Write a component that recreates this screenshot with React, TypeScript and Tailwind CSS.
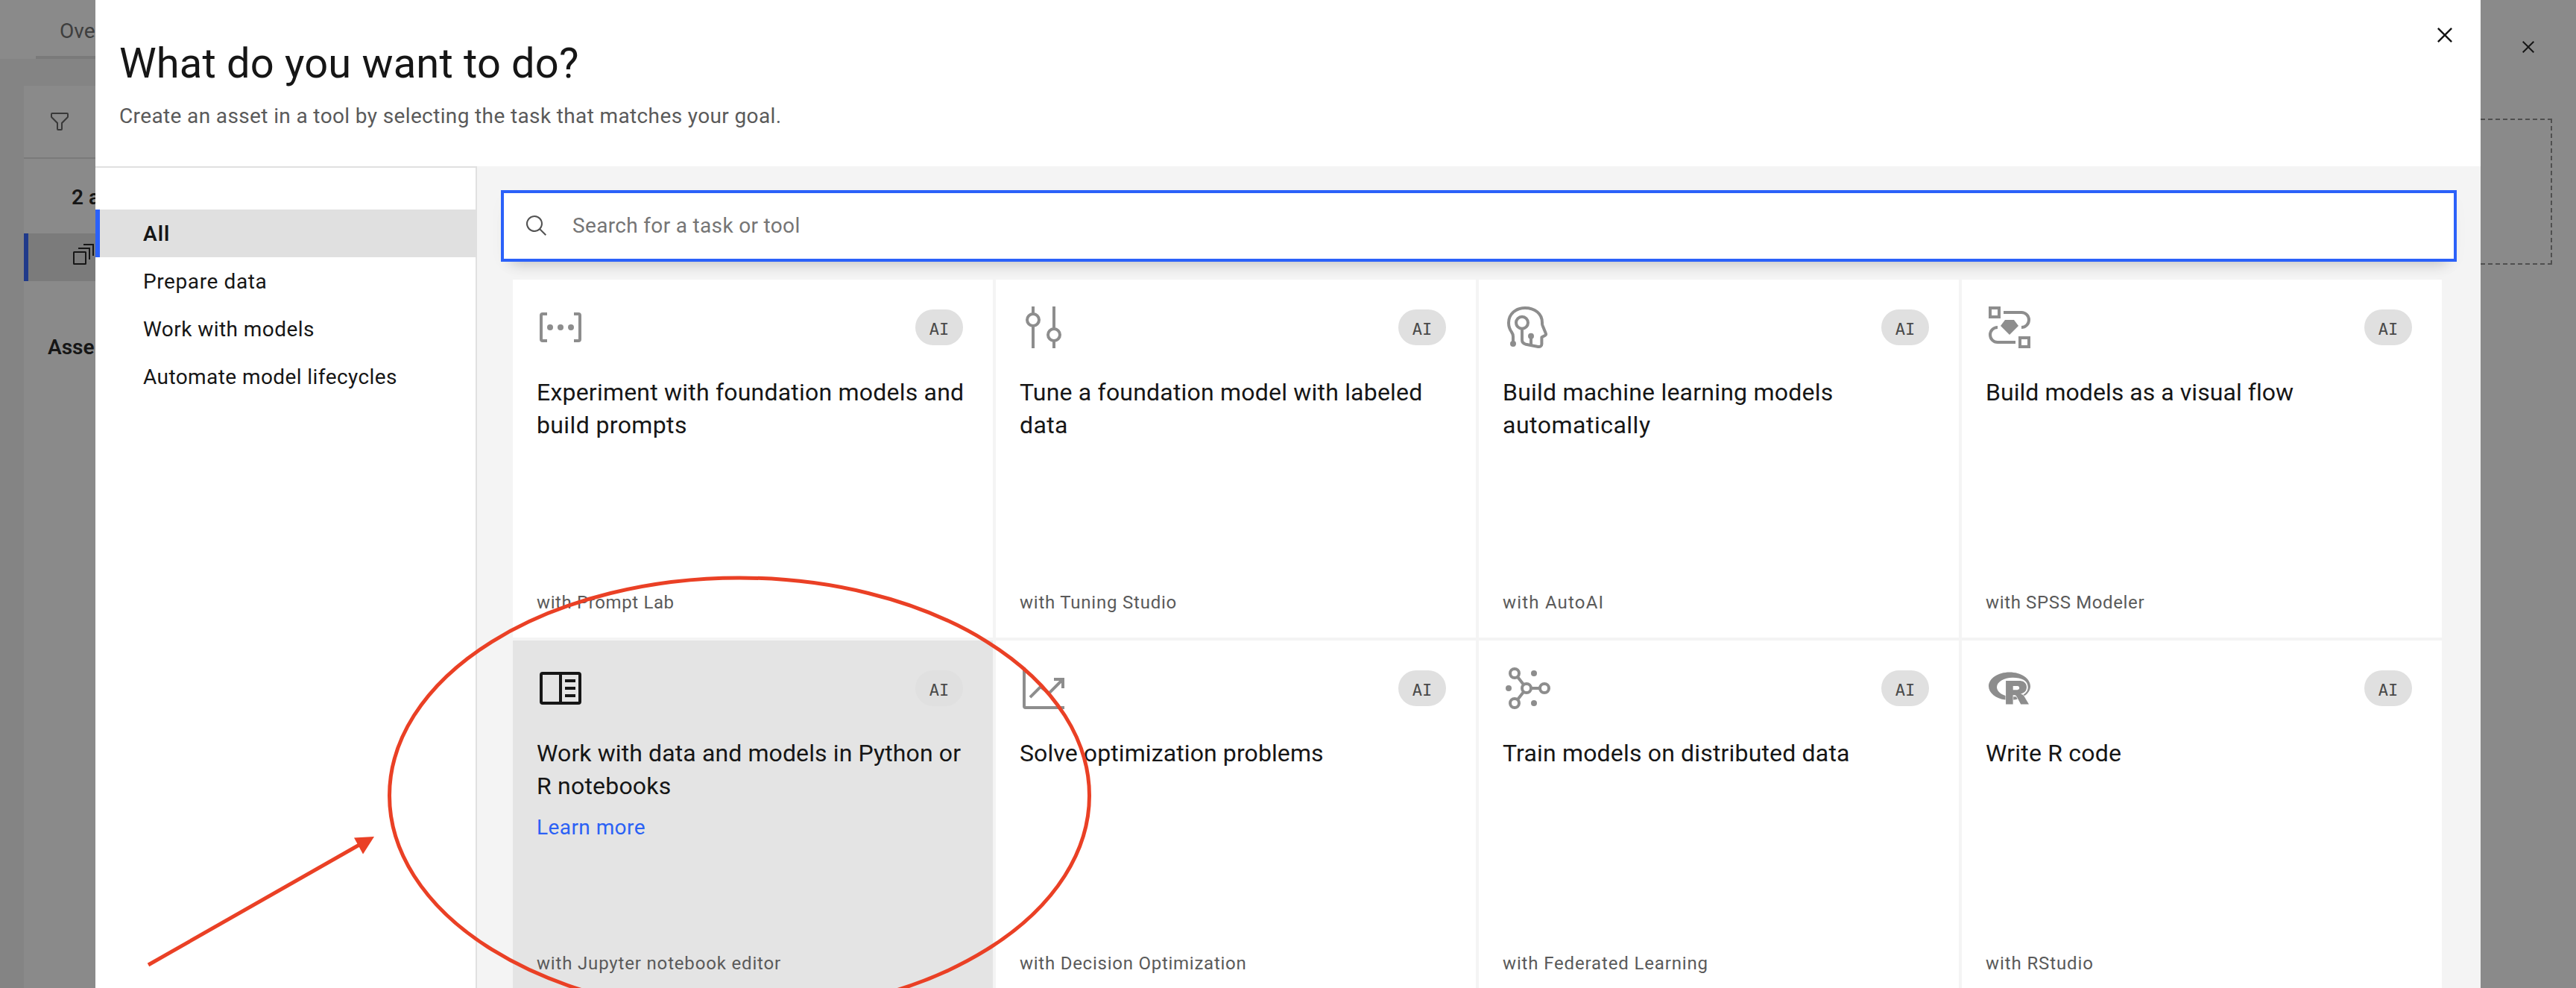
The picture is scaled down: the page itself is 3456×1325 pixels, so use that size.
import type { ReactNode } from "react";
import { SiR } from "react-icons/si";

type Line = { text: string; tracking: string };

type Task = {
  icon: ReactNode;
  title: Line[];
  tool: Line;
  active?: boolean;
};

function CardIcon({ children }: { children: ReactNode }) {
  return (
    <svg viewBox="0 0 32 32" className="h-16 w-16" fill="none" stroke="currentColor" strokeWidth="2">
      {children}
    </svg>
  );
}

function CloseIcon({ className }: { className: string }) {
  return (
    <svg viewBox="0 0 32 32" className={className} fill="currentColor">
      <path d="M24 9.4 22.6 8 16 14.6 9.4 8 8 9.4l6.6 6.6L8 22.6 9.4 24l6.6-6.6 6.6 6.6 1.4-1.4-6.6-6.6z" />
    </svg>
  );
}

const promptIcon = (
  <CardIcon>
    <path d="M7 7H4a1 1 0 0 0-1 1v16a1 1 0 0 0 1 1h3M25 7h3a1 1 0 0 1 1 1v16a1 1 0 0 1-1 1h-3" />
    <g fill="currentColor" stroke="none">
      <circle cx="9" cy="16" r="2" />
      <circle cx="16" cy="16" r="2" />
      <circle cx="23" cy="16" r="2" />
    </g>
  </CardIcon>
);

const tuneIcon = (
  <CardIcon>
    <circle cx="9" cy="11" r="4" />
    <circle cx="23" cy="21" r="4" />
    <path d="M9 2v5M9 15v15M23 2v15M23 25v5" />
  </CardIcon>
);

const autoAiIcon = (
  <CardIcon>
    <path
      d="M7 27V22.2C7 20.6 6.7 20.2 6 19.2C4.7 17.3 4 15.6 4 13C4 7 8.8 3 15 3C21.5 3 26.5 6.8 26.5 12.8C26.5 14.2 26.4 14.4 27 15.4L28.9 20C29.3 20.9 29 21.1 28.3 21.5L26.2 22.6V27.2C26.2 28.6 25 29.2 23.8 29L15.6 27.4C14 27 13 26 13 24.4V17"
      strokeLinejoin="round"
    />
    <circle cx="13" cy="12.9" r="4" />
    <path d="M19 22v6" />
    <g fill="currentColor" stroke="none">
      <circle cx="7" cy="27" r="2" />
      <circle cx="19" cy="21.9" r="2" />
    </g>
  </CardIcon>
);

const flowIcon = (
  <CardIcon>
    <rect x="3" y="3" width="6" height="6" />
    <rect x="23" y="23" width="6" height="6" />
    <path d="M12 6h12a5 5 0 0 1 0 10M20 26H8a5 5 0 0 1 0-10" />
    <path d="M13 11h6l3 4-6 6-6-6z" fill="currentColor" stroke="none" />
  </CardIcon>
);

const notebookIcon = (
  <CardIcon>
    <rect x="3" y="6" width="26" height="20" rx="1" />
    <path d="M16 6v20M19 11h7M19 16h7M19 21h7" />
  </CardIcon>
);

const chartIcon = (
  <CardIcon>
    <path d="M3 2v26a1 1 0 0 0 1 1h26M23 10h6v6M29 10l-9.3 9.3-5.7-4.2-7 7" />
  </CardIcon>
);

const networkIcon = (
  <CardIcon>
    <circle cx="8" cy="6" r="3" />
    <circle cx="8" cy="26" r="3" />
    <circle cx="16" cy="16" r="3" />
    <circle cx="28" cy="16" r="3" />
    <path d="M10 8.4l4.1 5.2M10 23.6l4.1-5.2M19 16h6" />
    <g fill="currentColor" stroke="none">
      <circle cx="21" cy="6" r="2" />
      <circle cx="4" cy="16" r="2" />
      <circle cx="21" cy="26" r="2" />
    </g>
  </CardIcon>
);

const rIcon = (
  <span className="flex h-16 w-16 items-center justify-center">
    <SiR className="h-14 w-14" />
  </span>
);

const tasks: Task[] = [
  {
    icon: promptIcon,
    title: [
      { text: "Experiment with foundation models and", tracking: "tracking-[0.21px]" },
      { text: "build prompts", tracking: "tracking-[0.38px]" },
    ],
    tool: { text: "with Prompt Lab", tracking: "tracking-[0.62px]" },
  },
  {
    icon: tuneIcon,
    title: [
      { text: "Tune a foundation model with labeled", tracking: "tracking-[0.2px]" },
      { text: "data", tracking: "tracking-[0.38px]" },
    ],
    tool: { text: "with Tuning Studio", tracking: "tracking-[0.78px]" },
  },
  {
    icon: autoAiIcon,
    title: [
      { text: "Build machine learning models", tracking: "tracking-[0.22px]" },
      { text: "automatically", tracking: "tracking-[0.5px]" },
    ],
    tool: { text: "with AutoAI", tracking: "tracking-[1.2px]" },
  },
  {
    icon: flowIcon,
    title: [{ text: "Build models as a visual flow", tracking: "tracking-[0.05px]" }],
    tool: { text: "with SPSS Modeler", tracking: "tracking-[0.64px]" },
  },
  {
    icon: notebookIcon,
    title: [
      { text: "Work with data and models in Python or", tracking: "tracking-[0.11px]" },
      { text: "R notebooks", tracking: "tracking-[0.2px]" },
    ],
    tool: { text: "with Jupyter notebook editor", tracking: "tracking-[0.83px]" },
    active: true,
  },
  {
    icon: chartIcon,
    title: [{ text: "Solve optimization problems", tracking: "tracking-[0.1px]" }],
    tool: { text: "with Decision Optimization", tracking: "tracking-[0.75px]" },
  },
  {
    icon: networkIcon,
    title: [{ text: "Train models on distributed data", tracking: "tracking-[0.17px]" }],
    tool: { text: "with Federated Learning", tracking: "tracking-[0.85px]" },
  },
  {
    icon: rIcon,
    title: [{ text: "Write R code", tracking: "tracking-[0.2px]" }],
    tool: { text: "with RStudio", tracking: "tracking-[0.9px]" },
  },
];

function TaskCard({ icon, title, tool, active }: Task) {
  return (
    <article className={`flex h-[480px] flex-col px-8 pt-8 pb-[31px] ${active ? "bg-[#e4e4e4]" : "bg-white"}`}>
      <div className={`flex items-center justify-between ${active ? "text-[#161616]" : "text-[#8d8d8d]"}`}>
        {icon}
        <span className="mr-2 flex h-12 w-16 items-center justify-center rounded-full bg-[#e0e0e0] pt-1 font-['DejaVu_Sans_Mono',monospace] text-[22px] text-[#4a4a4a]">
          AI
        </span>
      </div>
      <h2 className="mt-[33px] text-[32px] leading-11 whitespace-nowrap">
        {title.map((line) => (
          <span key={line.text} className={`block ${line.tracking}`}>
            {line.text}
          </span>
        ))}
      </h2>
      {active && (
        <a className="mt-4 text-[28px] leading-9 tracking-[0.43px] text-[#2b61f5]">Learn more</a>
      )}
      <p className={`mt-auto text-2xl leading-8 text-[#5a5a5a] ${tool.tracking}`}>{tool.text}</p>
    </article>
  );
}

const categories: Line[] = [
  { text: "All", tracking: "tracking-[1px]" },
  { text: "Prepare data", tracking: "tracking-[0.6px]" },
  { text: "Work with models", tracking: "tracking-[0.44px]" },
  { text: "Automate model lifecycles", tracking: "tracking-[0.42px]" },
];

/** Project page dimmed behind the dialog. */
function Backdrop() {
  return (
    <div className="flex h-full justify-between bg-[#8a8a8a] text-[#161616]">
      <div className="flex w-32 flex-col bg-[#848484] whitespace-nowrap">
        <div className="h-[79px] bg-[#8a8a8a] pl-12">
          <div className="h-full border-b-4 border-[#7a7a7a] pt-6 pl-8 text-[28px] leading-9 text-[#3e3e3e]">
            Ove
          </div>
        </div>
        <div className="mt-9 ml-8 flex flex-1 flex-col bg-[#8a8a8a]">
          <div className="h-[98px] border-b-2 border-[#7a7a7a] pt-8 pl-8">
            <svg viewBox="0 0 32 32" className="h-8 w-8" fill="#393939">
              <path d="M18 28h-4a2 2 0 0 1-2-2v-7.59L4.59 11A2 2 0 0 1 4 9.59V6a2 2 0 0 1 2-2h20a2 2 0 0 1 2 2v3.59a2 2 0 0 1-.59 1.41L20 18.41V26a2 2 0 0 1-2 2M6 6v3.59l8 8V26h4v-8.41l8-8V6Z" />
            </svg>
          </div>
          <div className="h-[100px] pt-[34px] pl-16 text-[28px] leading-9 font-semibold">2 a</div>
          <div className="h-16 border-l-[6px] border-[#203a8a] bg-[#7b7b7b] pt-3 pl-[58px]">
            <svg viewBox="0 0 32 32" className="h-8 w-8" fill="none" stroke="#161616" strokeWidth="2">
              <rect x="3" y="13" width="16" height="16" rx="0.5" />
              <path d="M9 8h15v15M16 3h13v15" />
            </svg>
          </div>
          <div className="mt-[71px] pl-8 text-[28px] leading-9 font-semibold">Asse</div>
        </div>
      </div>
      <div className="flex w-32 flex-col">
        <CloseIcon className="mt-[47px] ml-12 h-8 w-8" />
        <div className="mt-20 mr-8 -ml-10 h-[196px] border-2 border-dashed border-[#4f4f4f]" />
      </div>
    </div>
  );
}

/** Hand-drawn callout: ellipse and arrow over the notebook card. */
function Annotation() {
  return (
    <svg viewBox="0 0 3456 1325" className="pointer-events-none absolute inset-0 h-full w-full" fill="none">
      <ellipse cx="992" cy="1067" rx="469.5" ry="292" stroke="#ea4025" strokeWidth="5" />
      <path d="M199 1294 482 1133" stroke="#ea4025" strokeWidth="5" />
      <path d="M502 1122 475 1123.5 487 1145.5z" fill="#ea4025" />
    </svg>
  );
}

export default function App() {
  return (
    <div className="relative h-[1325px] w-full overflow-hidden font-[Roboto,sans-serif] text-[#161616]">
      <Backdrop />
      <section className="absolute inset-y-0 right-32 left-32 flex flex-col bg-white">
        <header className="flex h-[223px] shrink-0 justify-between pr-7 pl-8">
          <div className="pt-[49px]">
            <h1 className="text-[56px] leading-[72px] tracking-[0.17px]">What do you want to do?</h1>
            <p className="mt-[17px] text-[28px] leading-9 tracking-[0.37px] text-[#5a5a5a]">
              Create an asset in a tool by selecting the task that matches your goal.
            </p>
          </div>
          <CloseIcon className="mt-[27px] h-10 w-10" />
        </header>
        <div className="flex min-h-0 flex-1">
          <nav className="w-[512px] shrink-0 border-t-2 border-r-2 border-[#e0e0e0] pt-14">
            {categories.map((category, i) => (
              <div
                key={category.text}
                className={`-mr-0.5 h-16 border-l-[6px] pl-[58px] text-[28px] leading-[66px] ${category.tracking} ${
                  i === 0 ? "border-[#2b61f9] bg-[#e0e0e0] font-semibold" : "border-transparent"
                }`}
              >
                {category.text}
              </div>
            ))}
          </nav>
          <main className="flex-1 bg-[#f4f4f4] px-8 pt-8">
            <div className="flex h-24 items-center border-4 border-[#2b61f9] bg-white pl-7 text-[28px] text-[#757575] shadow-[0_16px_18px_-14px_rgba(0,0,0,0.2),0_8px_24px_-4px_rgba(0,0,0,0.03)]">
              <svg viewBox="0 0 32 32" className="h-8 w-8" fill="#525252">
                <path d="M29 27.586l-7.552-7.552a11.018 11.018 0 1 0-1.414 1.414L27.586 29ZM4 13a9 9 0 1 1 9 9 9.01 9.01 0 0 1-9-9" />
              </svg>
              <span className="ml-8 tracking-[0.33px]">Search for a task or tool</span>
            </div>
            <div className="relative mx-4 mt-6 grid w-[2588px] grid-cols-4 gap-1">
              {tasks.map((task) => (
                <TaskCard key={task.tool.text} {...task} />
              ))}
            </div>
          </main>
        </div>
      </section>
      <Annotation />
    </div>
  );
}
